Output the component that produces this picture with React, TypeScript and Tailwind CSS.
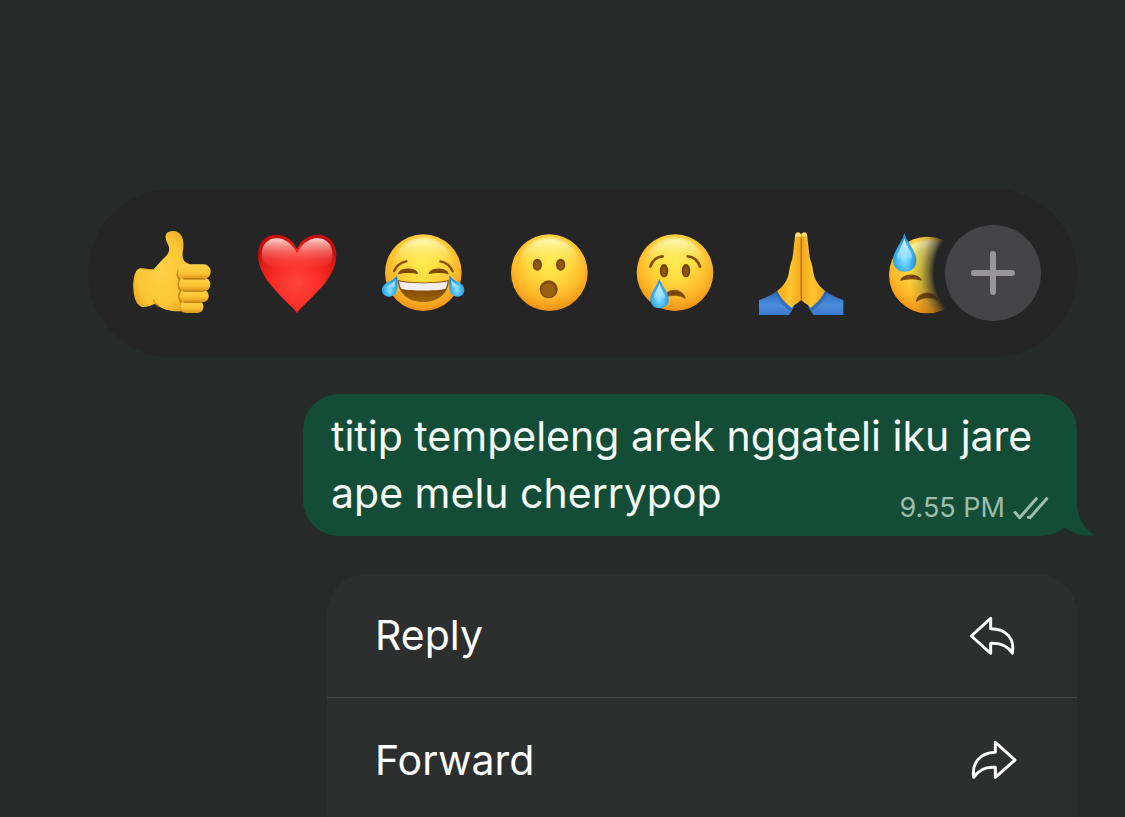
import React from "react";
import type { ReactNode } from "react";

interface Reaction {
  label: string;
  icon: ReactNode;
}

interface MenuAction {
  label: string;
  icon: ReactNode;
}

function Emoji({ viewBox, children }: { viewBox: string; children: ReactNode }) {
  return (
    <svg viewBox={viewBox} className="block size-21 overflow-visible" aria-hidden="true">
      {children}
    </svg>
  );
}

// Gradients shared by every reaction, rendered once
function EmojiDefs() {
  return (
    <svg className="absolute size-0" aria-hidden="true">
      <defs>
        <radialGradient id="face" cx="0.5" cy="0.36" r="0.66">
          <stop offset="0" stopColor="#ffec4c" />
          <stop offset="0.35" stopColor="#ffdc40" />
          <stop offset="0.7" stopColor="#fdb92b" />
          <stop offset="0.9" stopColor="#f59c1a" />
          <stop offset="1" stopColor="#e88912" />
        </radialGradient>
        <linearGradient id="shine" x1="0" y1="0" x2="0" y2="1">
          <stop offset="0" stopColor="#fffbd0" stopOpacity="0.95" />
          <stop offset="0.32" stopColor="#fff58a" stopOpacity="0.35" />
          <stop offset="0.6" stopColor="#ffe94c" stopOpacity="0" />
        </linearGradient>
        <linearGradient id="brown" x1="0" y1="0" x2="0" y2="1">
          <stop offset="0" stopColor="#6f3d06" />
          <stop offset="1" stopColor="#9c640c" />
        </linearGradient>
        <radialGradient id="drop" cx="0.5" cy="0.68" r="0.62">
          <stop offset="0" stopColor="#8fe4ff" />
          <stop offset="0.4" stopColor="#4fc0f8" />
          <stop offset="1" stopColor="#168bd8" />
        </radialGradient>
        <linearGradient id="dropShine" x1="0" y1="0" x2="0" y2="1">
          <stop offset="0" stopColor="#ffffff" stopOpacity="0.9" />
          <stop offset="0.75" stopColor="#c8f1ff" stopOpacity="0.5" />
          <stop offset="1" stopColor="#9be2ff" stopOpacity="0" />
        </linearGradient>
        <radialGradient id="skin" cx="0.5" cy="0.5" r="0.6">
          <stop offset="0" stopColor="#ffd045" />
          <stop offset="0.7" stopColor="#fdc636" />
          <stop offset="1" stopColor="#f0a81f" />
        </radialGradient>
        <linearGradient id="finger" x1="0" y1="0" x2="0" y2="1">
          <stop offset="0" stopColor="#ffd349" />
          <stop offset="0.6" stopColor="#fcc434" />
          <stop offset="1" stopColor="#dc911a" />
        </linearGradient>
        <radialGradient id="heart" cx="0.5" cy="0.62" r="0.62">
          <stop offset="0" stopColor="#ff453c" />
          <stop offset="0.5" stopColor="#fa2c26" />
          <stop offset="0.85" stopColor="#de1813" />
          <stop offset="1" stopColor="#c40e0c" />
        </radialGradient>
        <linearGradient id="heartShine" x1="0" y1="0" x2="0" y2="1">
          <stop offset="0" stopColor="#ffe1dc" stopOpacity="0.95" />
          <stop offset="0.5" stopColor="#ff9088" stopOpacity="0.5" />
          <stop offset="1" stopColor="#ff4a40" stopOpacity="0" />
        </linearGradient>
        <linearGradient id="palmLeft" x1="0" y1="0" x2="1" y2="0">
          <stop offset="0" stopColor="#f5a61a" />
          <stop offset="0.55" stopColor="#ffc62f" />
          <stop offset="1" stopColor="#f4a51c" />
        </linearGradient>
        <linearGradient id="sleeve" x1="0" y1="0" x2="0" y2="1">
          <stop offset="0" stopColor="#2b66b8" />
          <stop offset="0.6" stopColor="#4b8cdc" />
          <stop offset="1" stopColor="#3a7bd0" />
        </linearGradient>
        <radialGradient id="fade" gradientUnits="userSpaceOnUse" cx="369" cy="279" r="252">
          <stop offset="0.7" stopColor="#242524" />
          <stop offset="0.76" stopColor="#242524" stopOpacity="0.65" />
          <stop offset="0.86" stopColor="#242524" stopOpacity="0.25" />
          <stop offset="1" stopColor="#242524" stopOpacity="0" />
        </radialGradient>
        <filter id="soft" x="-20%" y="-20%" width="140%" height="140%">
          <feGaussianBlur stdDeviation="4" />
        </filter>
      </defs>
    </svg>
  );
}

function Face({ cx, cy }: { cx: number; cy: number }) {
  return (
    <>
      <circle cx={cx} cy={cy} r="115" fill="url(#face)" />
      <ellipse cx={cx} cy={cy - 28} rx="88" ry="76" fill="url(#shine)" filter="url(#soft)" />
    </>
  );
}

function ThumbsUp() {
  return (
    <Emoji viewBox="30 33 252 252">
      <path
        d="M56 146C44 152 39 178 40 204C41 234 50 256 66 261C82 262 96 255 106 251C124 267 150 275 184 274L200 268L200 140L208 132C192 126 186 118 188 98C192 76 192 58 182 44C173 32 151 28 139 41C133 52 140 64 146 78C150 92 145 102 136 110C122 123 112 137 100 148C84 149 66 142 56 146Z"
        fill="url(#skin)"
      />
      <path d="M100 148C88 151 76 151 66 146" fill="none" stroke="#e09b1c" strokeWidth="3" opacity="0.7" />
      <path d="M100 238C101 247 106 252 118 260" fill="none" stroke="#d18d18" strokeWidth="5" opacity="0.7" />
      <path d="M178 148C170 160 172 172 180 178C174 190 176 204 182 212C176 224 178 238 184 246C182 258 184 268 186 274" fill="none" stroke="#bd7a14" strokeWidth="7" opacity="0.8" />
      <rect x="181" y="242" width="69" height="37" rx="17" fill="url(#finger)" />
      <rect x="179" y="209" width="87" height="38" rx="18" fill="url(#finger)" />
      <rect x="177" y="173" width="94" height="40" rx="19" fill="url(#finger)" />
      <rect x="174" y="133" width="98" height="44" rx="21" fill="url(#finger)" />
      <path d="M190 177H254M190 214H251M192 247H245" fill="none" stroke="#b37413" strokeWidth="4" strokeLinecap="round" opacity="0.8" />
    </Emoji>
  );
}

function Heart() {
  return (
    <Emoji viewBox="33 33 252 252">
      <path
        d="M156 279C140 258 115 239 91 211C62 178 39 145 39 104C39 66 63 44 94 44C122 44 145 61 156 88C167 61 190 44 218 44C250 44 274 67 274 104C274 145 250 180 221 211C196 239 172 258 156 279Z"
        fill="url(#heart)"
      />
      <path
        d="M51 112C47 76 67 55 95 55C124 55 143 76 156 100C169 76 188 55 217 55C246 55 266 76 262 112C257 142 225 148 156 148C87 148 56 142 51 112Z"
        fill="url(#heartShine)"
      />
    </Emoji>
  );
}

function Joy() {
  return (
    <Emoji viewBox="36 33 252 252">
      <Face cx={160} cy={158} />
      <path d="M72 154C79 138 92 127 109 124M248 154C241 138 228 127 211 124" fill="none" stroke="#8a4e08" strokeWidth="7" strokeLinecap="round" />
      <path d="M86 161C92 144 133 142 142 160C128 156 101 156 86 161ZM178 160C187 142 229 144 234 161C220 156 194 156 178 160Z" fill="#804607" stroke="#804607" strokeWidth="4" strokeLinejoin="round" />
      <path d="M84 180C108 190 212 190 236 180C237 219 205 246 160 246C115 246 83 219 84 180Z" fill="url(#brown)" />
      <path d="M87 184C114 192 206 192 233 184C232 194 230 201 226 207C194 213 126 213 94 207C90 201 88 194 87 184Z" fill="#f2eef0" />
      <path d="M81 167C83 188 84 205 78 219C70 233 46 235 38 220C31 206 39 194 54 186C65 181 74 176 81 167Z" fill="url(#drop)" />
      <path d="M239 167C237 188 236 205 242 219C250 233 274 235 281 220C287 206 280 194 265 186C254 181 246 176 239 167Z" fill="url(#drop)" />
      <path d="M77 178C72 190 58 193 50 202C56 207 69 208 74 202Z" fill="url(#dropShine)" />
      <path d="M243 178C248 190 262 193 270 202C264 207 251 208 246 202Z" fill="url(#dropShine)" />
    </Emoji>
  );
}

function Surprised() {
  return (
    <Emoji viewBox="24 33 252 252">
      <Face cx={148} cy={158} />
      <ellipse cx="112" cy="134" rx="14" ry="18" fill="#7a4407" />
      <ellipse cx="182" cy="134" rx="14" ry="18" fill="#7a4407" />
      <ellipse cx="112" cy="136" rx="8" ry="12" fill="#925a10" />
      <ellipse cx="182" cy="136" rx="8" ry="12" fill="#925a10" />
      <circle cx="146" cy="208" r="27" fill="#80490a" />
      <circle cx="146" cy="211" r="21" fill="#97610f" />
    </Emoji>
  );
}

function Crying() {
  return (
    <Emoji viewBox="27 33 252 252">
      <Face cx={150} cy={158} />
      <path d="M76 140C82 122 95 110 113 109M225 140C219 122 206 110 188 109" fill="none" stroke="#85500b" strokeWidth="8" strokeLinecap="round" />
      <ellipse cx="117" cy="152" rx="13" ry="20" fill="#774006" />
      <ellipse cx="183" cy="152" rx="13" ry="20" fill="#774006" />
      <ellipse cx="117" cy="154" rx="7" ry="14" fill="#8f560d" />
      <ellipse cx="183" cy="154" rx="7" ry="14" fill="#8f560d" />
      <path d="M118 232C124 204 174 202 181 236C164 224 139 223 118 232Z" fill="#7c4608" stroke="#7c4608" strokeWidth="2" strokeLinejoin="round" />
      <path d="M103 176C109 197 131 215 131 238C131 255 119 265 104 265C88 265 76 255 76 238C76 215 98 197 103 176Z" fill="url(#drop)" />
      <path d="M103 188C107 207 120 218 120 234C117 245 91 245 87 234C87 218 100 207 103 188Z" fill="url(#dropShine)" />
    </Emoji>
  );
}

function FoldedHands() {
  const half = (
    <>
      <path d="M42 240C62 234 82 224 100 210L148 252L146 262L132 285H42Z" fill="url(#sleeve)" />
      <path d="M97 212C106 232 122 250 141 264L137 274C118 262 100 240 92 216Z" fill="#245397" opacity="0.5" />
      <path
        d="M168 50V240C160 250 148 252 140 263C122 250 106 234 97 213C112 200 124 188 130 166C134 150 134 134 142 116C146 94 147 70 151 42C154 35 164 36 167 42Z"
        fill="url(#palmLeft)"
      />
      <path d="M151 46C153 36 165 36 168 43L167 52C160 46 154 48 151 56Z" fill="#ffdc71" />
    </>
  );
  return (
    <Emoji viewBox="45 33 252 252">
      <path d="M160 52H177V236H160Z" fill="#b8700c" />
      {half}
      <g transform="translate(337 0) scale(-1 1)">{half}</g>
      <path d="M169 54V236" stroke="#b06a0c" strokeWidth="4" />
    </Emoji>
  );
}

function Sweat() {
  return (
    <Emoji viewBox="48 153 252 252">
      <Face cx={172} cy={285} />
      <path d="M92 301C97 281 145 279 154 300C138 295 109 295 92 301Z" fill="#7c4608" stroke="#7c4608" strokeWidth="3" strokeLinejoin="round" />
      <path d="M138 365C144 333 193 329 203 361C184 350 157 351 138 365Z" fill="#7c4608" stroke="#7c4608" strokeWidth="2" strokeLinejoin="round" />
      <path d="M103 159C111 187 139 214 139 240C139 263 124 275 105 275C84 275 69 262 69 240C69 214 96 187 103 159Z" fill="url(#drop)" />
      <path d="M103 175C109 200 127 215 127 235C121 250 87 250 81 235C81 215 98 200 103 175Z" fill="url(#dropShine)" />
      <circle cx="369" cy="279" r="252" fill="url(#fade)" />
    </Emoji>
  );
}

function ReplyIcon() {
  return (
    <svg viewBox="54 42 144 126" className="h-[42px] w-12" fill="none" stroke="currentColor" strokeWidth="9" strokeLinejoin="round" aria-hidden="true">
      <path d="M122 52L64 105L122 157V127C154 125 173 134 187 157C195 114 170 83 122 83Z" />
    </svg>
  );
}

function ForwardIcon() {
  return (
    <svg viewBox="54 39 144 126" className="h-[42px] w-12 overflow-visible" fill="none" stroke="currentColor" strokeWidth="9" strokeLinejoin="round" aria-hidden="true">
      <path d="M136 49L195 102L136 154V124C105 121 86 132 71 154C65 112 88 81 136 79Z" />
    </svg>
  );
}

const reactions: Reaction[] = [
  { label: "Thumbs up", icon: <ThumbsUp /> },
  { label: "Love", icon: <Heart /> },
  { label: "Tears of joy", icon: <Joy /> },
  { label: "Surprised", icon: <Surprised /> },
  { label: "Crying", icon: <Crying /> },
  { label: "Folded hands", icon: <FoldedHands /> },
  { label: "Downcast with sweat", icon: <Sweat /> },
];

const actions: MenuAction[] = [
  { label: "Reply", icon: <ReplyIcon /> },
  { label: "Forward", icon: <ForwardIcon /> },
];

function ReactionBar() {
  return (
    <div className="ml-10 flex h-42 shrink-0 items-center self-stretch rounded-full bg-[#242524] pr-9 pl-[42px]">
      <div className="flex min-w-0 flex-1 gap-[42px] overflow-hidden">
        {reactions.map((reaction) => (
          <button key={reaction.label} type="button" aria-label={reaction.label} className="shrink-0 cursor-pointer">
            {reaction.icon}
          </button>
        ))}
      </div>
      <button
        type="button"
        aria-label="More reactions"
        className="flex size-24 shrink-0 cursor-pointer items-center justify-center rounded-full bg-[#444446] text-[#98969b]"
      >
        <svg viewBox="0 0 44 44" className="size-11" stroke="currentColor" strokeWidth="6" strokeLinecap="round" aria-hidden="true">
          <path d="M22 3V41M3 22H41" />
        </svg>
      </button>
    </div>
  );
}

function MessageBubble() {
  return (
    <div className="relative mt-[37px] flow-root max-w-[774px] shrink-0 rounded-[36px] bg-[#144d37] px-7 pt-[14px] pb-[13px] text-[41px] leading-[57px] text-[#f4fbf7]">
      titip tempeleng arek nggateli iku jare ape melu cherrypop
      <span className="float-right mt-7 flex items-center gap-2 text-[27px] leading-[30px] text-[#9dbdad]">
        <time>9.55 PM</time>
        <svg viewBox="396 42 108 75" className="h-[25px] w-9" fill="none" stroke="currentColor" strokeWidth="9" strokeLinecap="round" strokeLinejoin="round" aria-label="Delivered">
          <path d="M402 91L416 107L466 50" />
          <path d="M442 106L447 107L497 50" />
        </svg>
      </span>
      <svg viewBox="549 39 93 126" className="absolute -right-[18px] bottom-0 h-[42px] w-[31px]" aria-hidden="true">
        <path d="M587 39V60C588 110 608 140 641 163C610 168 575 159 549 138V39Z" fill="#144d37" />
      </svg>
    </div>
  );
}

function ContextMenu() {
  return (
    <div className="mt-[38px] w-full max-w-[750px] shrink-0 divide-y divide-[#434545] overflow-hidden rounded-t-[39px] bg-[#2d2e2e]">
      {actions.map((action) => (
        <button
          key={action.label}
          type="button"
          className="flex h-31 w-full cursor-pointer items-center justify-between pr-[61px] pl-12 text-left text-[41px] leading-[57px] text-white"
        >
          <span>{action.label}</span>
          {action.icon}
        </button>
      ))}
    </div>
  );
}

export default function App() {
  return (
    <main className="flex h-screen flex-col items-end overflow-hidden bg-[#262a29] px-12 pt-[189px] font-['Inter',sans-serif]">
      <EmojiDefs />
      <ReactionBar />
      <MessageBubble />
      <ContextMenu />
    </main>
  );
}
